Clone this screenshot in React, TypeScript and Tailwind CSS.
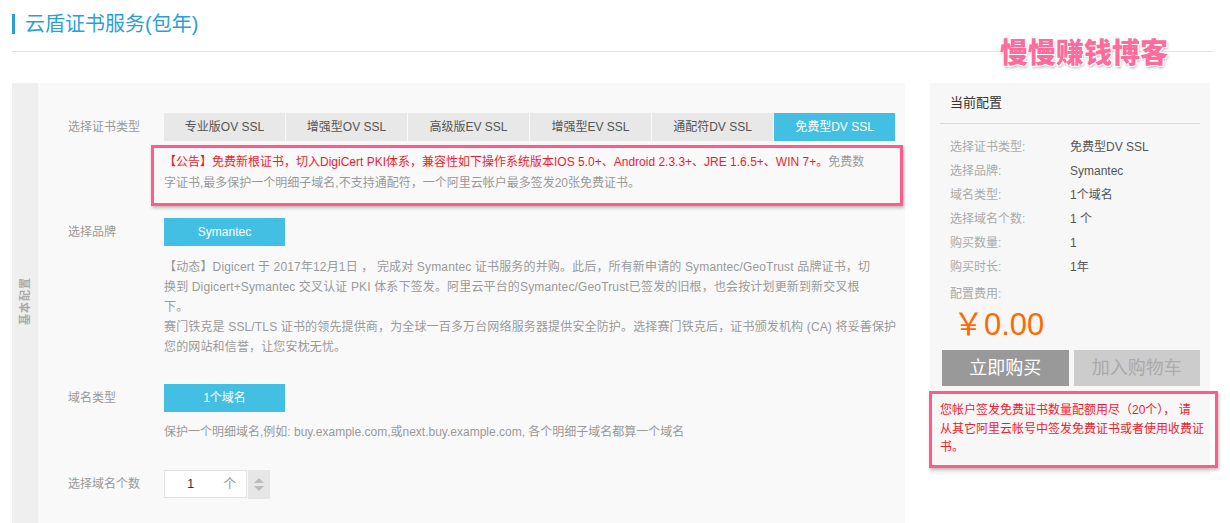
const font = "font-['PingFang_SC','Liberation_Sans','Noto_Sans_CJK_SC',sans-serif]";

const certTypes = ["专业版OV SSL", "增强型OV SSL", "高级版EV SSL", "增强型EV SSL", "通配符DV SSL", "免费型DV SSL"];

const summary: [string, string][] = [
  ["选择证书类型:", "免费型DV SSL"],
  ["选择品牌:", "Symantec"],
  ["域名类型:", "1个域名"],
  ["选择域名个数:", "1 个"],
  ["购买数量:", "1"],
  ["购买时长:", "1年"],
];

const brandNotes = [
  "【动态】Digicert 于 2017年12月1日 ， 完成对 Symantec 证书服务的并购。此后，所有新申请的 Symantec/GeoTrust 品牌证书，切",
  "换到 Digicert+Symantec 交叉认证 PKI 体系下签发。阿里云平台的Symantec/GeoTrust已签发的旧根，也会按计划更新到新交叉根",
  "下。",
  "赛门铁克是 SSL/TLS 证书的领先提供商，为全球一百多万台网络服务器提供安全防护。选择赛门铁克后，证书颁发机构 (CA) 将妥善保护",
  "您的网站和信誉，让您安枕无忧。",
];

function Label({ children }: { children: React.ReactNode }) {
  return <div className="w-[96px] shrink-0 h-[28px] leading-[28px] text-[12px] text-[#999]">{children}</div>;
}

function Pink({ className }: { className: string }) {
  return (
    <div
      className={`absolute border-[3px] border-[#ff5b8c] shadow-[1px_2px_3px_rgba(0,0,0,0.25)] pointer-events-none ${className}`}
    />
  );
}

export default function App() {
  return (
    <div className={`relative w-[1230px] h-[523px] overflow-hidden bg-white pl-[12px] pr-[17px] ${font}`}>
      {/* heading */}
      <div className="flex items-center h-[52px] border-b border-[#e3e3e3] pb-[4px]">
        <span className="w-[3px] h-[20px] bg-[#2a9fd6] mr-[10px]" />
        <h1 className="text-[20px] text-[#2a9fd6] leading-none">云盾证书服务(包年)</h1>
      </div>

      <div className="absolute left-[1000px] top-[38px] text-[28px] font-black text-[#ff6b9b] leading-[32px] [text-shadow:0_0_2px_#fff,1px_1px_0_#fff,-1px_-1px_0_#fff,1px_-1px_0_#fff,-1px_1px_0_#fff,1px_2px_3px_rgba(0,0,0,0.35)]">
        慢慢赚钱博客
      </div>

      <div className="flex mt-[31px] gap-[25px]">
        {/* left config panel */}
        <div className="flex w-[893px] h-[460px]">
          <div className="w-[26px] bg-[#efefef] flex flex-col items-center pt-[210px]">
            <span className="-rotate-90 whitespace-nowrap text-[11px] leading-[16px] font-bold text-[#aaa] tracking-[1px]">基本配置</span>
          </div>
          <div className="flex-1 bg-[#f9f9f9] pl-[30px] pt-[30px]">
            {/* cert type */}
            <div className="flex">
              <Label>选择证书类型</Label>
              <div className="flex gap-[1px]">
                {certTypes.map((t, i) => (
                  <div
                    key={t}
                    className={
                      i === 5
                        ? "w-[121px] h-[28px] leading-[28px] text-center text-[12px] bg-[#43bfe3] text-white"
                        : "w-[121px] h-[28px] leading-[28px] text-center text-[12px] bg-[#e8e8e8] text-[#555]"
                    }
                  >
                    {t}
                  </div>
                ))}
              </div>
            </div>
            <div className="relative ml-[96px] mt-[11px] w-[731px] text-[12px] leading-[21px] text-[#999] whitespace-nowrap">
              <div>
                <span className="text-[#f5192d]">
                  【公告】免费新根证书，切入DigiCert PKI体系，兼容性如下操作系统版本IOS 5.0+、Android 2.3.3+、JRE 1.6.5+、WIN 7+。
                </span>
                免费数
              </div>
              <div>字证书,最多保护一个明细子域名,不支持通配符，一个阿里云帐户最多签发20张免费证书。</div>
              <Pink className="-left-[13px] -top-[7px] -right-[8px] -bottom-[12px]" />
            </div>

            {/* brand */}
            <div className="flex mt-[24px]">
              <Label>选择品牌</Label>
              <div className="w-[121px] h-[28px] leading-[28px] text-center text-[12px] bg-[#43bfe3] text-white">Symantec</div>
            </div>
            <div className="ml-[96px] mt-[11px] text-[12px] leading-[20px] text-[#999] whitespace-nowrap tracking-[0.15px]">
              {brandNotes.map((l) => (
                <div key={l}>{l}</div>
              ))}
            </div>

            {/* domain type */}
            <div className="flex mt-[27px]">
              <Label>域名类型</Label>
              <div className="w-[121px] h-[28px] leading-[28px] text-center text-[12px] bg-[#43bfe3] text-white">1个域名</div>
            </div>
            <div className="ml-[96px] mt-[10px] text-[12px] leading-[20px] text-[#999]">
              保护一个明细域名,例如: buy.example.com,或next.buy.example.com, 各个明细子域名都算一个域名
            </div>

            {/* domain count */}
            <div className="flex mt-[28px]">
              <Label>选择域名个数</Label>
              <div className="flex gap-[1px]">
                <div className="w-[83px] h-[28px] bg-white border border-[#e3e3e3] flex items-center text-[13px] text-[#333]">
                  <span className="ml-[22px]">1</span>
                  <span className="ml-[29px] text-[#999]">个</span>
                </div>
                <div className="w-[22px] h-[29px] bg-[#e6e6e6] flex flex-col items-center justify-center gap-[3px]">
                  <span className="w-0 h-0 border-l-[5px] border-r-[5px] border-b-[5px] border-l-transparent border-r-transparent border-b-[#bbb]" />
                  <span className="w-0 h-0 border-l-[5px] border-r-[5px] border-t-[5px] border-l-transparent border-r-transparent border-t-[#bbb]" />
                </div>
              </div>
            </div>
          </div>
        </div>

        {/* right summary panel */}
        <div className="w-[280px] h-[392px] bg-[#f7f7f7] px-[10px]">
          <div className="h-[41px] border-b border-[#dcdcdc] pl-[10px] pt-[10px] text-[13px] leading-[20px] text-[#333]">当前配置</div>
          <div className="pl-[10px] pt-[11px]">
            {summary.map(([k, v]) => (
              <div key={k} className="flex h-[24px] items-center text-[12px]">
                <span className="w-[120px] text-[#aaa]">{k}</span>
                <span className="text-[#555]">{v}</span>
              </div>
            ))}
            <div className="mt-[3px] h-[24px] flex items-center text-[12px] text-[#aaa]">配置费用:</div>
            <div className="h-[36px] flex items-center text-[31px] text-[#ff6a00] leading-none pl-[3px]">￥0.00</div>
          </div>
          <div className="flex gap-[5px] mt-[8px] pl-[2px]">
            <div className="w-[127px] h-[36px] bg-[#999] text-white text-[18px] flex items-center justify-center">立即购买</div>
            <div className="w-[127px] h-[36px] bg-[#ccc] text-[#aaa] text-[18px] flex items-center justify-center">加入购物车</div>
          </div>
          <div className="relative mt-[15px] w-[266px] text-[12px] leading-[18.5px] text-[#f5192d] whitespace-nowrap">
            <div>您帐户签发免费证书数量配额用尽（20个）， 请</div>
            <div>从其它阿里云帐号中签发免费证书或者使用收费证</div>
            <div>书。</div>
            <Pink className="-left-[11px] -top-[10px] -right-[12px] -bottom-[11px]" />
          </div>
        </div>
      </div>
    </div>
  );
}
